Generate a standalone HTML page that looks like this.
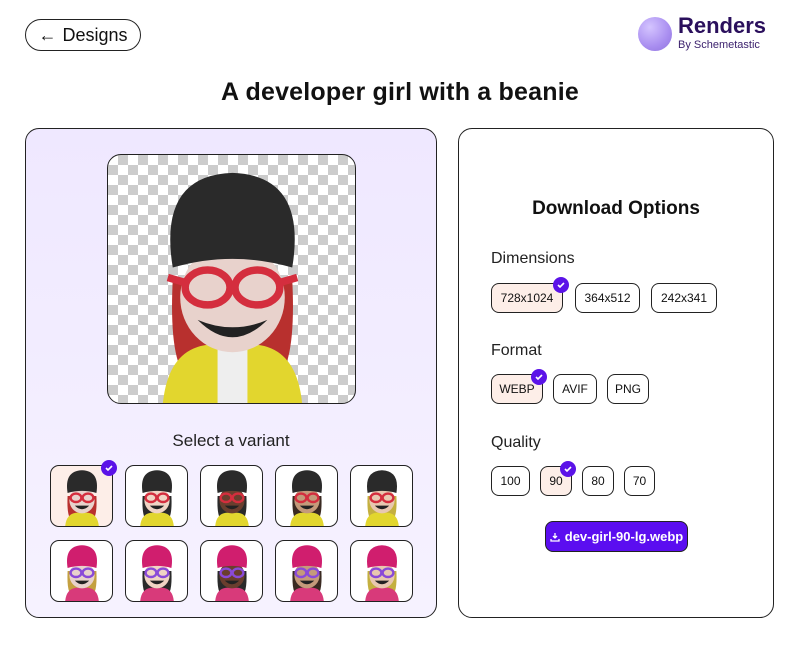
<!DOCTYPE html>
<html><head><meta charset="utf-8"><style>
*{box-sizing:border-box;margin:0;padding:0}
body{width:800px;height:650px;background:#fff;font-family:"Liberation Sans",sans-serif;color:#111;position:relative;overflow:hidden}
.abs{position:absolute}
.back{left:25px;top:19px;width:116px;height:32px;border:1.5px solid #222;border-radius:16px;font-size:18px;display:flex;align-items:center;justify-content:center;gap:6px}
.logo{left:638px;top:17px;width:34px;height:34px;border-radius:50%;background:radial-gradient(circle at 35% 30%,#d4c4ff,#a98ef0 60%,#8e72dc)}
h1{position:absolute;left:0;width:800px;top:78px;text-align:center;font-size:25px;font-weight:bold;letter-spacing:0.2px}
.left{left:25px;top:128px;width:412px;height:490px;border:1.5px solid #222;border-radius:14px;background:linear-gradient(#efe8ff,#f6f2ff)}
.right{left:458px;top:128px;width:316px;height:490px;border:1.5px solid #222;border-radius:14px;background:#fff}
.img{left:107px;top:154px;width:249px;height:250px;border:1.5px solid #222;border-radius:14px;overflow:hidden;background-color:#fff;background-image:linear-gradient(45deg,#ccc 25%,transparent 25%,transparent 75%,#ccc 75%),linear-gradient(45deg,#ccc 25%,transparent 25%,transparent 75%,#ccc 75%);background-size:20px 20px;background-position:0 0,10px 10px}
.th{width:63px;height:62px;border:1.5px solid #222;border-radius:9px;background:#fff;overflow:hidden}
.sel{background:#fdeee8}
.chk{width:16px;height:16px;border-radius:50%;background:#5b13e8;display:flex;align-items:center;justify-content:center}
.lab{font-size:16px;color:#222}
.opt{height:30px;border:1.5px solid #222;border-radius:8px;font-size:12px;display:flex;align-items:center;justify-content:center;background:#fff}
.opt.on{background:#fdeee8}
</style></head><body>
<div class="abs back"><span style="font-size:18px">←</span><span>Designs</span></div>
<div class="abs logo"></div>
<div class="abs" style="left:678px;top:13px;font-size:22px;font-weight:bold;color:#2a0f5c">Renders</div>
<div class="abs" style="left:678px;top:39px;font-size:11px;color:#3a1f6c">By Schemetastic</div>
<h1>A developer girl with a beanie</h1>
<div class="abs left"></div>
<div class="abs right"></div>
<div class="abs img">
<svg width="249" height="250" viewBox="0 0 100 100"><path d="M26 50 Q24 90 36 92 L64 92 Q76 90 74 50Z" fill="#b8302e"/><path d="M22 100 Q24 78 40 76 L60 76 Q76 78 78 100Z" fill="#e2d62e"/><rect x="44" y="78" width="12" height="22" fill="#eee"/><ellipse cx="50" cy="57" rx="21" ry="22" fill="#e8d2cc"/><path d="M36 66 Q50 80 64 66 Q50 72 36 66Z" fill="#222"/><path d="M26 45 Q20 8 50 7 Q80 8 74 45 Q50 38 26 45Z" fill="#2a2a2a"/><g fill="none" stroke="#d42e3e" stroke-width="3"><ellipse cx="40" cy="53" rx="9" ry="7"/><ellipse cx="60" cy="53" rx="9" ry="7"/><path d="M31 51 L24 49 M69 51 L76 49"/></g></svg>
</div>
<div class="abs" style="left:0;width:462px;top:431px;text-align:center;font-size:17px;color:#222">Select a variant</div>
<div id="thumbs"></div>
<div class="abs" style="left:458px;width:316px;top:198px;text-align:center;font-size:19px;font-weight:bold">Download Options</div>
<div class="abs lab" style="left:491px;top:250px">Dimensions</div>
<div class="abs opt on" style="left:491px;top:283px;width:72px">728x1024</div>
<div class="abs opt" style="left:575px;top:283px;width:65px">364x512</div>
<div class="abs opt" style="left:651px;top:283px;width:66px">242x341</div>
<div class="abs chk" style="left:553px;top:277px"><svg width="10" height="10" viewBox="0 0 10 10"><path d="M2 5 L4 7 L8 3" stroke="#fff" stroke-width="1.6" fill="none"/></svg></div>
<div class="abs lab" style="left:491px;top:342px">Format</div>
<div class="abs opt on" style="left:491px;top:374px;width:52px">WEBP</div>
<div class="abs opt" style="left:553px;top:374px;width:44px">AVIF</div>
<div class="abs opt" style="left:607px;top:374px;width:42px">PNG</div>
<div class="abs chk" style="left:531px;top:369px"><svg width="10" height="10" viewBox="0 0 10 10"><path d="M2 5 L4 7 L8 3" stroke="#fff" stroke-width="1.6" fill="none"/></svg></div>
<div class="abs lab" style="left:491px;top:434px">Quality</div>
<div class="abs opt" style="left:491px;top:466px;width:39px">100</div>
<div class="abs opt on" style="left:540px;top:466px;width:32px">90</div>
<div class="abs opt" style="left:582px;top:466px;width:32px">80</div>
<div class="abs opt" style="left:624px;top:466px;width:31px">70</div>
<div class="abs chk" style="left:560px;top:461px"><svg width="10" height="10" viewBox="0 0 10 10"><path d="M2 5 L4 7 L8 3" stroke="#fff" stroke-width="1.6" fill="none"/></svg></div>
<div class="abs" style="left:545px;top:521px;width:143px;height:31px;background:#5b0ef0;border:1.5px solid #222;border-radius:8px;color:#fff;font-size:13px;font-weight:bold;display:flex;align-items:center;justify-content:center;gap:5px"><svg width="10" height="10" viewBox="0 0 10 10"><path d="M5 1 V6 M3 4 L5 6 L7 4 M1 7 V9 H9 V7" stroke="#fff" stroke-width="1.3" fill="none"/></svg>dev-girl-90-lg.webp</div>
<script>
var xs=[50,125,200,275,350],h='';
var hats=['#2a2a2a','#2a2a2a','#2a2a2a','#2a2a2a','#2a2a2a'];
var row1=[['#b8302e','#e8d2cc','#d42e3e','#e2d62e'],['#2a2a2a','#f0d4c4','#d42e3e','#e2d62e'],['#2a2a2a','#6a3e2e','#d42e3e','#e2d62e'],['#3a2a22','#c49a7a','#d42e3e','#e2d62e'],['#c4b040','#e8c8b0','#d42e3e','#e2d62e']];
function av(hat,hair,skin,gl,jk){return '<svg width="60" height="60" viewBox="0 0 100 100"><path d="M26 50 Q24 90 36 92 L64 92 Q76 90 74 50Z" fill="'+hair+'"/><path d="M22 100 Q24 80 40 78 L60 78 Q76 80 78 100Z" fill="'+jk+'"/><ellipse cx="50" cy="57" rx="21" ry="22" fill="'+skin+'"/><path d="M38 66 Q50 78 62 66Z" fill="#222"/><path d="M26 45 Q20 8 50 7 Q80 8 74 45 Q50 38 26 45Z" fill="'+hat+'"/><g fill="none" stroke="'+gl+'" stroke-width="4"><ellipse cx="40" cy="53" rx="9" ry="7"/><ellipse cx="60" cy="53" rx="9" ry="7"/></g></svg>';}
for(var i=0;i<5;i++){var r=row1[i];h+='<div class="abs th'+(i==0?' sel':'')+'" style="left:'+xs[i]+'px;top:465px;display:flex;justify-content:center;align-items:flex-end">'+av('#2a2a2a',r[0],r[1],r[2],r[3])+'</div>';
h+='<div class="abs th" style="left:'+xs[i]+'px;top:540px;display:flex;justify-content:center;align-items:flex-end">'+av('#d01e6e',r[0]=='#b8302e'?'#c4a040':r[0],r[1],'#8a4ad8','#d83a7a')+'</div>';}
h+='<div class="abs chk" style="left:101px;top:460px"><svg width="10" height="10" viewBox="0 0 10 10"><path d="M2 5 L4 7 L8 3" stroke="#fff" stroke-width="1.6" fill="none"/></svg></div>';
document.getElementById('thumbs').innerHTML=h;
</script>
</body></html>
